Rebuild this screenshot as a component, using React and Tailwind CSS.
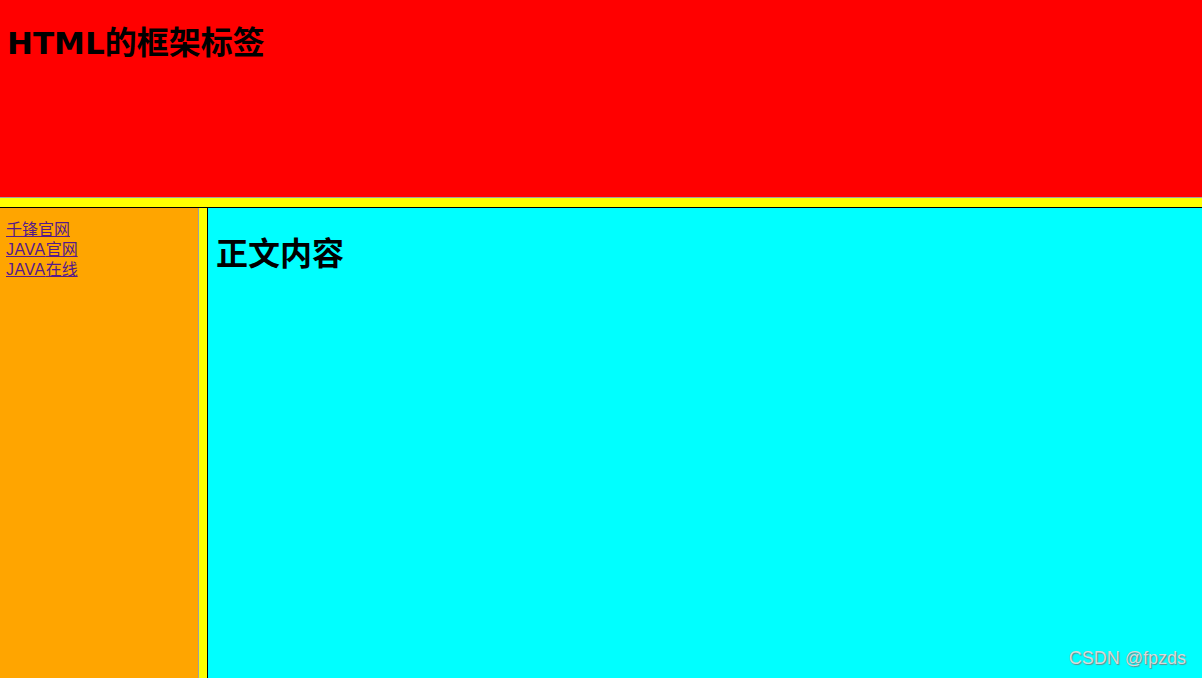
export default function App() {
  const cjk = { fontFamily: '"Liberation Sans", "Noto Sans CJK SC", sans-serif' };
  const head = { fontFamily: '"Noto Sans CJK SC", sans-serif' };
  return (
    <div className="relative flex h-[678px] w-[1202px] flex-col overflow-hidden bg-[#ffff00]" style={cjk}>
      <div className="h-[198px] shrink-0 border-b border-[#a0a0a0] bg-[#ff0000] px-[7px] pt-[17px]">
        <h1 className="text-[32px] font-bold leading-[46px] text-black" style={head}>
          <span className="text-[31px]" style={{ fontFamily: '"DejaVu Sans", sans-serif' }}>HTML</span>的框架标签
        </h1>
      </div>
      <div className="h-[9px] shrink-0" />
      <div className="flex min-h-0 flex-1 border-t border-black">
        <div className="w-[199px] shrink-0 border-r border-[#a0a0a0] bg-[#ffa500] px-[6px] pt-[12px] text-[16px] leading-[20px]">
          <a href="#" className="block text-[#551a8b] underline">千锋官网</a>
          <a href="#" className="block text-[#551a8b] underline"><span className="tracking-[0.5px]">JAVA</span>官网</a>
          <a href="#" className="block text-[#551a8b] underline"><span className="tracking-[0.5px]">JAVA</span>在线</a>
        </div>
        <div className="w-[8px] shrink-0" />
        <div className="flex-1 border-l border-black bg-[#00ffff] px-[8px] pt-[20px]">
          <h1 className="text-[32px] font-bold leading-[46px] text-black" style={head}>正文内容</h1>
        </div>
      </div>
      <div className="absolute bottom-[9px] right-[16px] text-[18px] leading-[22px] text-[#d8d8d8] [text-shadow:1px_1px_1px_#6a8a8a]" style={{ fontFamily: '"Liberation Sans", sans-serif' }}>CSDN @fpzds</div>
    </div>
  );
}
